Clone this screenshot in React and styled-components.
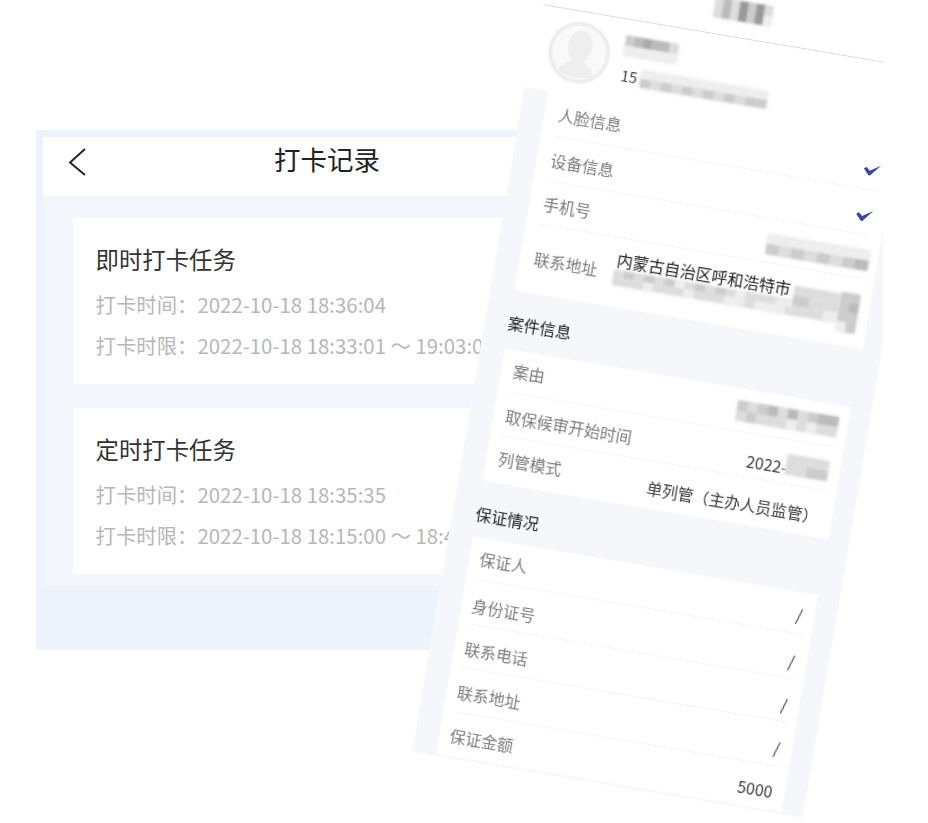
import React from "react";
import styled, { createGlobalStyle } from "styled-components";

const Global = createGlobalStyle`
  html, body { margin: 0; padding: 0; background: #fff; }
  body { font-family: "Noto Sans CJK SC", "Noto Sans", sans-serif; }
`;

const Page = styled.div`
  position: relative;
  width: 928px;
  height: 823px;
  overflow: hidden;
  padding: 130px 0 0 36px;
  box-sizing: border-box;
  filter: blur(0.4px);
`;

const Screen = styled.div`
  width: 582px;
  height: 520px;
  padding: 7px 0 0 7px;
  box-sizing: border-box;
  background: #edf3fb;
`;

const Header = styled.header`
  height: 59px;
  background: #fff;
  display: grid;
  grid-template-columns: 1fr auto 1fr;
  align-items: center;
  padding-left: 25px;
  padding-right: 25px;
  margin-right: 7px;
  box-sizing: border-box;
`;

const HeaderTitle = styled.h1`
  margin: 0;
  font-size: 26.5px;
  font-weight: 400;
  line-height: 36px;
  color: #222;
  position: relative;
  top: -8px;
`;

const BackIcon = styled.svg`
  display: block;
  position: relative;
  top: -5px;
`;

const Body = styled.main`
  height: 390px;
  background: #f3f6fa;
  padding: 22px 0 0 30px;
  box-sizing: border-box;
  display: flex;
  flex-direction: column;
  gap: 24px;
`;

const TaskCard = styled.section`
  width: 480px;
  height: 166px;
  padding: 25px 0 0 22.5px;
  box-sizing: border-box;
  background: #fff;
  overflow: hidden;
  white-space: nowrap;
`;

const TaskTitle = styled.h2`
  margin: 0 0 9px;
  font-size: 23.4px;
  font-weight: 400;
  line-height: 32px;
  color: #333;
`;

const TaskLine = styled.div`
  font-size: 20.4px;
  line-height: 40.5px;
  color: #b7b7b7;
`;

const Clip = styled.div`
  position: absolute;
  left: 0;
  top: 0;
  width: 883px;
  height: 823px;
  overflow: hidden;
`;

const Sheet = styled.div`
  position: absolute;
  left: 547px;
  top: -45px;
  width: 396px;
  background: #fff;
  transform-origin: 0 0;
  transform: rotate(9.6deg);
`;

const SheetTop = styled.div`
  height: 49px;
  margin-left: 5px;
  border-bottom: 1px solid #dcdcdc;
`;

const Profile = styled.div`
  height: 84px;
  padding: 10px 0 0 17px;
  box-sizing: border-box;
  display: flex;
  align-items: flex-start;
`;

const AvatarIcon = styled.svg`
  display: block;
  flex: none;
`;

const Phone = styled.span`
  margin: 36px 0 0 14px;
  font-size: 15px;
  line-height: 20px;
  color: #444;
`;

const Gutter = styled.div`
  background: #f5f7fb;
  padding: 0 19px 2px 24px;
`;

const InfoCard = styled.section`
  background: #fff;
  margin-right: ${(p) => p.$trim || 0}px;
  padding: 0 ${(p) => 12 - (p.$trim || 0)}px 0 ${(p) => p.$inset}px;
`;

const SectionTitle = styled.h3`
  margin: 0 0 0 -1px;
  padding: ${(p) => p.$top}px 0 ${(p) => p.$bottom}px;
  font-size: 16px;
  font-weight: 400;
  line-height: 20px;
  color: #222;
`;

const Row = styled.div`
  height: ${(p) => p.$h}px;
  padding-top: ${(p) => p.$pt}px;
  box-sizing: border-box;
  display: flex;
  justify-content: space-between;
  align-items: flex-start;
  border-bottom: ${(p) => (p.$last ? "none" : "1px solid #f4f4f4")};
`;

const Label = styled.span`
  flex: none;
  font-size: 16px;
  line-height: 20px;
  color: #7b7b7b;
`;

const Value = styled.span`
  font-size: ${(p) => p.$size || 16}px;
  line-height: 20px;
  color: #3a3a3a;
  white-space: nowrap;
  margin-top: ${(p) => p.$mt ?? 2}px;
  margin-right: ${(p) => p.$mr || 3}px;
`;

const Address = styled(Value)`
  flex: 1;
  margin-left: 18px;
  margin-right: 0;
  margin-top: -13px;
  color: #222;
`;

const CheckIcon = styled.svg`
  display: block;
  margin-top: 7px;
`;

const Censor = styled.svg`
  position: absolute;
  left: ${(p) => p.$x}px;
  top: ${(p) => p.$y}px;
  width: ${(p) => p.$w}px;
  height: ${(p) => p.$h}px;
  overflow: visible;
  filter: blur(1px) drop-shadow(0 0 2px #ececec);
`;

/* One string per mosaic row; each letter is the grey level of a tile. */
function Mosaic({ x, y, w, h, tiles }) {
  const cols = tiles[0].length;
  const rows = tiles.length;
  return (
    <Censor $x={x} $y={y} $w={w} $h={h} viewBox={`0 0 ${cols} ${rows}`} preserveAspectRatio="none" aria-hidden="true">
      {tiles.map((line, r) =>
        line.split("").map((c, i) => (
          <rect key={`${r}-${i}`} x={i} y={r} width={1.02} height={1.02} fill={`#${c}${c}${c}`} />
        ))
      )}
    </Censor>
  );
}

function Check() {
  return (
    <CheckIcon width="17" height="12" viewBox="0 0 17 12" aria-hidden="true">
      <path d="M0 5.5 L2.6 3.6 L6.2 6.8 L16.5 0 L7.2 11.6 L5.6 11.6 Z" fill="#3a479f" />
    </CheckIcon>
  );
}

const tasks = [
  { title: "即时打卡任务", time: "2022-10-18 18:36:04", span: "2022-10-18 18:33:01 ～ 19:03:01" },
  { title: "定时打卡任务", time: "2022-10-18 18:35:35", span: "2022-10-18 18:15:00 ～ 18:45:00" },
];

export default function App() {
  return (
    <>
      <Global />
      <Page>
        <Screen>
          <Header>
            <BackIcon width="20" height="30" viewBox="0 0 20 30" aria-hidden="true">
              <path d="M17 2 L2 15.5 L17 28" fill="none" stroke="#222" strokeWidth="1.9" />
            </BackIcon>
            <HeaderTitle>打卡记录</HeaderTitle>
            <span />
          </Header>
          <Body>
            {tasks.map((t) => (
              <TaskCard key={t.title}>
                <TaskTitle>{t.title}</TaskTitle>
                <TaskLine>打卡时间：{t.time}</TaskLine>
                <TaskLine>打卡时限：{t.span}</TaskLine>
              </TaskCard>
            ))}
          </Body>
        </Screen>

        <Clip>
          <Sheet>
            <SheetTop />
            <Profile>
              <AvatarIcon width="62" height="62" viewBox="0 0 62 62" aria-hidden="true">
                <circle cx="31" cy="31" r="29" fill="#f9f9f9" stroke="#eeeeee" strokeWidth="4" />
                <ellipse cx="31" cy="25" rx="12" ry="16.5" fill="#eeeeee" />
                <path d="M13 52 C15 44 22 42 26 38 L36 38 C40 42 47 44 49 52 C42 57 20 57 13 52 Z" fill="#eeeeee" />
              </AvatarIcon>
              <Phone>15</Phone>
            </Profile>
            <Gutter>
              <InfoCard $inset={14}>
                <Row $h={44} $pt={11}><Label>人脸信息</Label><Check /></Row>
                <Row $h={45} $pt={13}><Label>设备信息</Label><Check /></Row>
                <Row $h={44} $pt={12}><Label>手机号</Label></Row>
                <Row $h={69} $pt={24} $last><Label>联系地址</Label><Address>内蒙古自治区呼和浩特市</Address></Row>
              </InfoCard>
              <SectionTitle $top={22} $bottom={17}>案件信息</SectionTitle>
              <InfoCard $inset={12} $trim={2}>
                <Row $h={43} $pt={10}><Label>案由</Label></Row>
                <Row $h={44} $pt={13}><Label>取保候审开始时间</Label><Value $mt={4} $mr={43}>2022-</Value></Row>
                <Row $h={47} $pt={12} $last><Label>列管模式</Label><Value $size={15.8} $mt={5} $mr={4}>单列管（主办人员监管）</Value></Row>
              </InfoCard>
              <SectionTitle $top={23} $bottom={14}>保证情况</SectionTitle>
              <InfoCard $inset={10.5} $trim={3}>
                <Row $h={42} $pt={10}><Label>保证人</Label><Value>/</Value></Row>
                <Row $h={45} $pt={15}><Label>身份证号</Label><Value>/</Value></Row>
                <Row $h={44} $pt={14}><Label>联系电话</Label><Value>/</Value></Row>
                <Row $h={45} $pt={14}><Label>联系地址</Label><Value>/</Value></Row>
                <Row $h={44} $pt={13} $last><Label>保证金额</Label><Value>5000</Value></Row>
              </InfoCard>
            </Gutter>

            <Mosaic x={174} y={13} w={58} h={20} tiles={["dbd9c9d", "dbd9c9e"]} />
            <Mosaic x={92} y={66} w={53} h={20} tiles={["cbabbd", "eeeeee"]} />
            <Mosaic x={113} y={98} w={128} h={17} tiles={["eeeeeeeeeeee", "cdcdcdcdcdcc"]} />
            <Mosaic x={265} y={238} w={103} h={20} tiles={["eeeeeeee", "cdcdcdcb"]} />
            <Mosaic x={119} y={299} w={185} h={15} tiles={["dcdcdcedcdcdedddee", "dddedddedddeedeeed"]} />
            <Mosaic x={300} y={285} w={48} h={29} tiles={["ddd", "cdd", "dde"]} />
            <Mosaic x={347} y={283} w={19} h={39} tiles={["cc", "cb", "cc", "ec"]} />
            <Mosaic x={263} y={407} w={102} h={20} tiles={["cdcbdbdcbb", "dcdddededd"]} />
            <Mosaic x={321} y={452} w={42} h={20} tiles={["dddd", "ddcc"]} />
          </Sheet>
        </Clip>
      </Page>
    </>
  );
}
